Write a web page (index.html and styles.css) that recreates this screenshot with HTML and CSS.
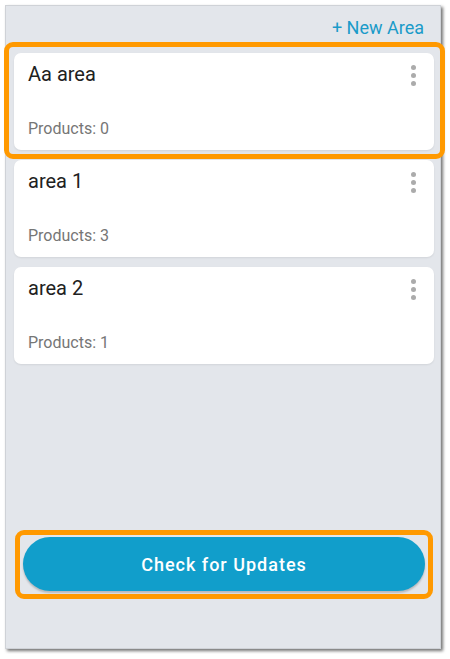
FILE: index.html
```html
<!DOCTYPE html>
<html lang="en">
<head>
  <meta charset="UTF-8" />
  <title>Areas</title>
  <link rel="stylesheet" href="styles.css">
</head>
<body>

  <div class="screen">
    <!-- Header -->
    <div class="header">
      <a href="#" class="new-area">+ New Area</a>
    </div>

    <!-- Area list -->
    <div class="area-list">
      <div class="area-card highlighted">
        <div class="area-top">
          <span class="area-name">Aa area</span>
          <span class="kebab"><i></i><i></i><i></i></span>
        </div>
        <div class="area-count">Products: 0</div>
      </div>

      <div class="area-card">
        <div class="area-top">
          <span class="area-name">area 1</span>
          <span class="kebab"><i></i><i></i><i></i></span>
        </div>
        <div class="area-count">Products: 3</div>
      </div>

      <div class="area-card">
        <div class="area-top">
          <span class="area-name">area 2</span>
          <span class="kebab"><i></i><i></i><i></i></span>
        </div>
        <div class="area-count">Products: 1</div>
      </div>
    </div>

    <!-- Update button -->
    <div class="update-wrap highlighted">
      <button class="update-btn">Check for Updates</button>
    </div>
  </div>

</body>
</html>
```

FILE: styles.css
```css
* {
  box-sizing: border-box;
}

body {
  margin: 0;
  background: #fff;
  font-family: Roboto, "Noto Sans", sans-serif;
}

.screen {
  margin: 5px;
  width: 436px;
  height: 644px;
  background: #e3e6eb;
  border: 1px solid #cfd2d7;
  box-shadow: 2px 2px 3px rgba(0, 0, 0, 0.55);
  display: flex;
  flex-direction: column;
  padding: 0 6px 57px 8px;
}

.header {
  display: flex;
  justify-content: flex-end;
  padding: 11px 10px 0 0;
}

.new-area {
  color: #1a9bc9;
  text-decoration: none;
  font-size: 18px;
  line-height: 22px;
}

.area-list {
  margin-top: 14px;
  display: flex;
  flex-direction: column;
  gap: 10px;
}

.area-card {
  position: relative;
  background: #fff;
  border-radius: 7px;
  height: 97px;
  padding: 9px 14px 11px;
  display: flex;
  flex-direction: column;
  justify-content: space-between;
  box-shadow: 0 1px 2px rgba(0, 0, 0, 0.08);
}

.area-top {
  display: flex;
  justify-content: space-between;
  align-items: flex-start;
}

.area-name {
  font-size: 20px;
  line-height: 24px;
  color: #212121;
}

.area-count {
  font-size: 16px;
  line-height: 20px;
  color: #767676;
}

.kebab {
  display: flex;
  flex-direction: column;
  gap: 3px;
  margin: 3px 4px 0 0;
}

.kebab i {
  display: block;
  width: 5px;
  height: 5px;
  border-radius: 50%;
  background: #ababab;
}

.update-wrap {
  position: relative;
  margin: auto 9px 0;
}

.update-btn {
  display: block;
  width: 100%;
  height: 54px;
  border: none;
  border-radius: 27px;
  background: #119ecb;
  color: #fff;
  font-family: Roboto, sans-serif;
  font-size: 18px;
  font-weight: 500;
  letter-spacing: 1px;
  box-shadow: 0 2px 2px rgba(0, 0, 0, 0.2);
  cursor: pointer;
}

/* orange annotation frames */
.highlighted::after {
  content: "";
  position: absolute;
  border: 5px solid #ff9900;
  border-radius: 9px;
  pointer-events: none;
}

.area-card.highlighted::after {
  inset: -11px -11px -9px -10px;
}

.update-wrap.highlighted::after {
  inset: -7px -8px -8px -8px;
}
```
